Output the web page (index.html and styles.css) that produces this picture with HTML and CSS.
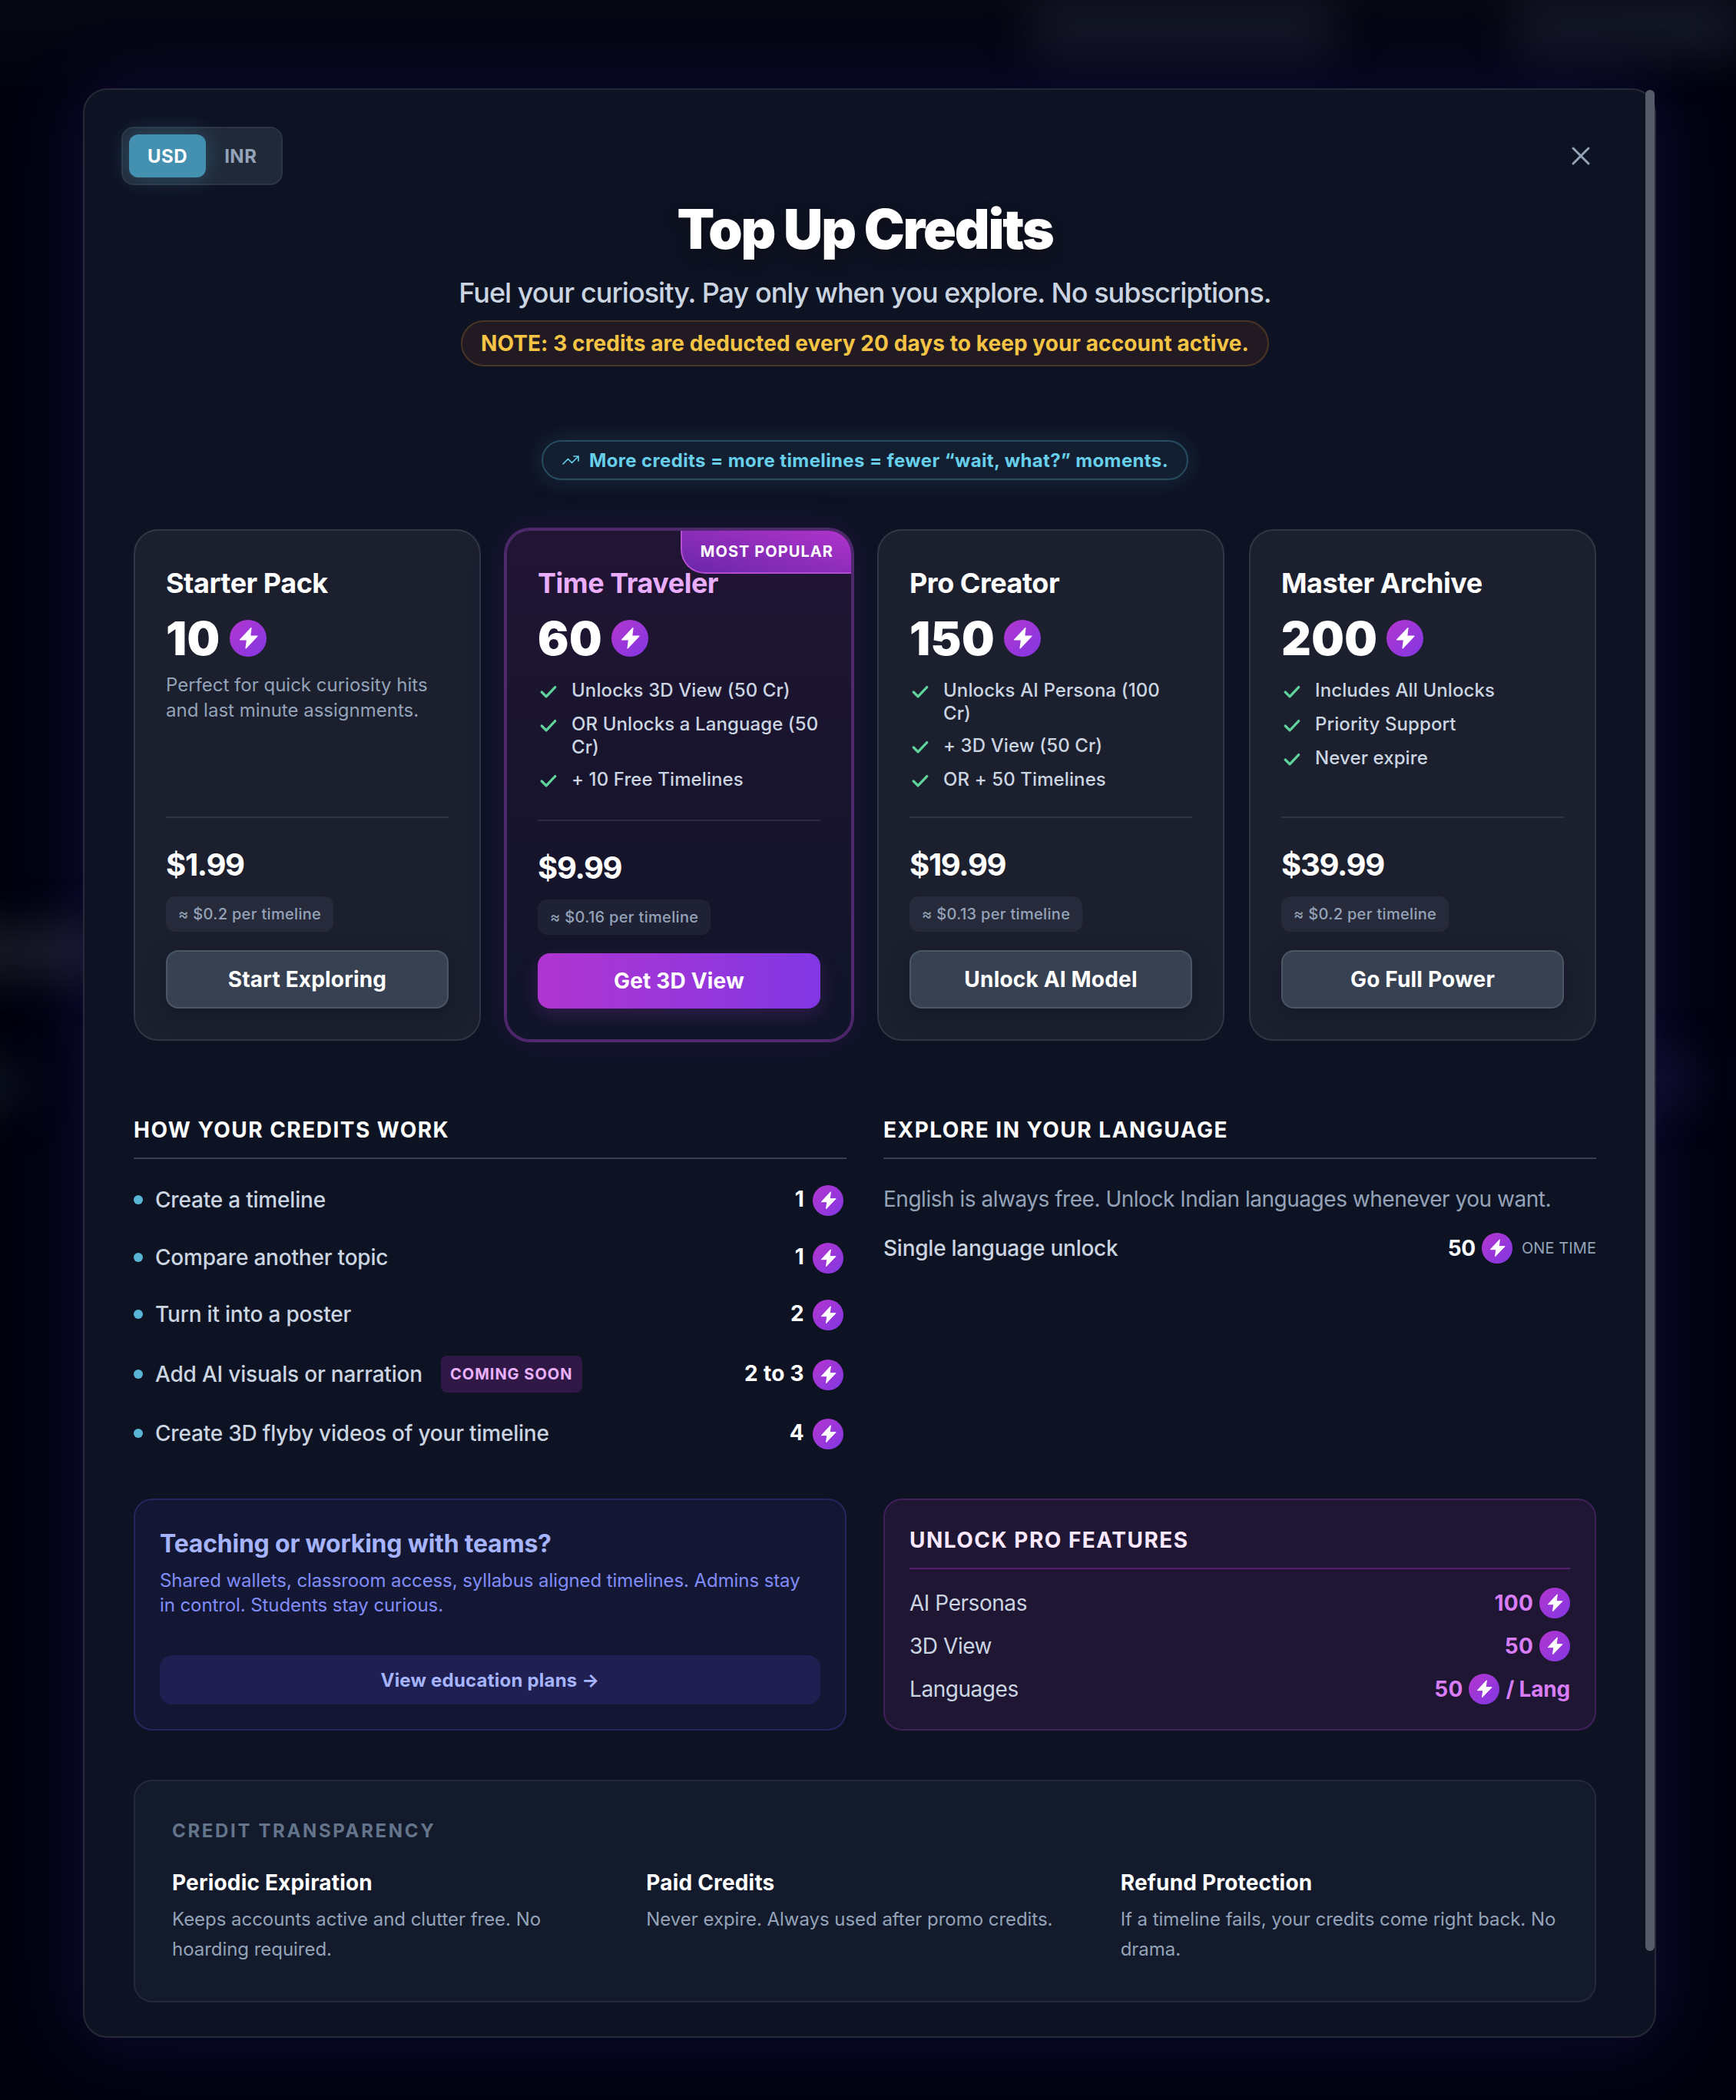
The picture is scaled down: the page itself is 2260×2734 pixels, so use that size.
FILE: index.html
```
<!DOCTYPE html>
<html lang="en">
<head>
    <meta charset="utf-8">
    <title>Top Up Credits</title>
    <link rel="stylesheet" href="styles.css">
</head>
<body>
    <svg class="sprite">
        <defs>
            <symbol id="bolt" viewBox="0 0 48 48">
                <path d="M28 10.5 L13.5 26 H22.5 L21 37 L36 21.2 H26.7 Z" fill="#fff" stroke="#fff" stroke-width="1.2" stroke-linejoin="round"/>
            </symbol>
            <symbol id="check" viewBox="0 0 24 24">
                <path d="M19.5 6.5 9.5 17l-5-5" fill="none" stroke="currentColor" stroke-width="2.8" stroke-linecap="round" stroke-linejoin="round"/>
            </symbol>
        </defs>
    </svg>

    <div class="overlay">
        <div class="blur blur_nav_a"></div>
        <div class="blur blur_nav_b"></div>
        <div class="blur blur_left_a"></div>
        <div class="blur blur_left_b"></div>
        <div class="blur blur_right"></div>

        <div class="modal">
            <div class="scrollbar"></div>

            <div class="modal_top">
                <div class="currency">
                    <div class="currency_item active">USD</div>
                    <div class="currency_item">INR</div>
                </div>
                <svg class="close" viewBox="0 0 24 24"><path d="M18 6 6 18M6 6l12 12"/></svg>
            </div>

            <div class="header">
                <h1>Top Up Credits</h1>
                <div class="subtitle">Fuel your curiosity. Pay only when you explore. No subscriptions.</div>
                <div class="note">NOTE: 3 credits are deducted every 20 days to keep your account active.</div>
                <div class="tagline">
                    <svg class="trend" viewBox="0 0 24 24"><path d="M22 7 13.5 15.5 8.5 10.5 2 17M16 7h6v6"/></svg>
                    <span>More credits = more timelines = fewer “wait, what?” moments.</span>
                </div>
            </div>

            <div class="plans">
                <div class="plan">
                    <div class="plan_name">Starter Pack</div>
                    <div class="plan_credits">10 <svg class="coin"><use href="#bolt"/></svg></div>
                    <div class="plan_desc">Perfect for quick curiosity hits and last minute assignments.</div>
                    <div class="plan_bottom">
                        <div class="price">$1.99</div>
                        <div class="rate">≈ $0.2 per timeline</div>
                        <div class="buy">Start Exploring</div>
                    </div>
                </div>

                <div class="plan popular">
                    <div class="badge">MOST POPULAR</div>
                    <div class="plan_name">Time Traveler</div>
                    <div class="plan_credits">60 <svg class="coin"><use href="#bolt"/></svg></div>
                    <div class="features">
                        <div class="feature"><svg class="check"><use href="#check"/></svg><span>Unlocks 3D View (50 Cr)</span></div>
                        <div class="feature"><svg class="check"><use href="#check"/></svg><span>OR Unlocks a Language (50<br>Cr)</span></div>
                        <div class="feature"><svg class="check"><use href="#check"/></svg><span>+ 10 Free Timelines</span></div>
                    </div>
                    <div class="plan_bottom">
                        <div class="price">$9.99</div>
                        <div class="rate">≈ $0.16 per timeline</div>
                        <div class="buy">Get 3D View</div>
                    </div>
                </div>

                <div class="plan">
                    <div class="plan_name">Pro Creator</div>
                    <div class="plan_credits">150 <svg class="coin"><use href="#bolt"/></svg></div>
                    <div class="features">
                        <div class="feature"><svg class="check"><use href="#check"/></svg><span>Unlocks AI Persona (100<br>Cr)</span></div>
                        <div class="feature"><svg class="check"><use href="#check"/></svg><span>+ 3D View (50 Cr)</span></div>
                        <div class="feature"><svg class="check"><use href="#check"/></svg><span>OR + 50 Timelines</span></div>
                    </div>
                    <div class="plan_bottom">
                        <div class="price">$19.99</div>
                        <div class="rate">≈ $0.13 per timeline</div>
                        <div class="buy">Unlock AI Model</div>
                    </div>
                </div>

                <div class="plan">
                    <div class="plan_name">Master Archive</div>
                    <div class="plan_credits">200 <svg class="coin"><use href="#bolt"/></svg></div>
                    <div class="features">
                        <div class="feature"><svg class="check"><use href="#check"/></svg><span>Includes All Unlocks</span></div>
                        <div class="feature"><svg class="check"><use href="#check"/></svg><span>Priority Support</span></div>
                        <div class="feature"><svg class="check"><use href="#check"/></svg><span>Never expire</span></div>
                    </div>
                    <div class="plan_bottom">
                        <div class="price">$39.99</div>
                        <div class="rate">≈ $0.2 per timeline</div>
                        <div class="buy">Go Full Power</div>
                    </div>
                </div>
            </div>

            <div class="info">
                <div class="section">
                    <h2>HOW YOUR CREDITS WORK</h2>
                    <div class="costs">
                        <div class="cost"><i class="dot"></i><span>Create a timeline</span><b>1</b><svg class="coin small"><use href="#bolt"/></svg></div>
                        <div class="cost"><i class="dot"></i><span>Compare another topic</span><b>1</b><svg class="coin small"><use href="#bolt"/></svg></div>
                        <div class="cost"><i class="dot"></i><span>Turn it into a poster</span><b>2</b><svg class="coin small"><use href="#bolt"/></svg></div>
                        <div class="cost tall"><i class="dot"></i><span>Add AI visuals or narration</span><em class="soon">COMING SOON</em><b>2 to 3</b><svg class="coin small"><use href="#bolt"/></svg></div>
                        <div class="cost"><i class="dot"></i><span>Create 3D flyby videos of your timeline</span><b>4</b><svg class="coin small"><use href="#bolt"/></svg></div>
                    </div>
                </div>

                <div class="section">
                    <h2>EXPLORE IN YOUR LANGUAGE</h2>
                    <div class="language_text">English is always free. Unlock Indian languages whenever you want.</div>
                    <div class="language">
                        <span>Single language unlock</span><b>50</b><svg class="coin small"><use href="#bolt"/></svg><small>ONE TIME</small>
                    </div>
                </div>

                <div class="box teams">
                    <h3>Teaching or working with teams?</h3>
                    <p>Shared wallets, classroom access, syllabus aligned timelines. Admins stay<br>in control. Students stay curious.</p>
                    <div class="teams_button">View education plans →</div>
                </div>

                <div class="box pro">
                    <h2>UNLOCK PRO FEATURES</h2>
                    <div class="pro_rows">
                        <div class="pro_row"><span>AI Personas</span><b>100</b><svg class="coin small"><use href="#bolt"/></svg></div>
                        <div class="pro_row"><span>3D View</span><b>50</b><svg class="coin small"><use href="#bolt"/></svg></div>
                        <div class="pro_row"><span>Languages</span><b>50</b><svg class="coin small"><use href="#bolt"/></svg><b class="per">/ Lang</b></div>
                    </div>
                </div>
            </div>

            <div class="transparency">
                <h4>CREDIT TRANSPARENCY</h4>
                <div class="policies">
                    <div>
                        <h5>Periodic Expiration</h5>
                        <p>Keeps accounts active and clutter free. No hoarding required.</p>
                    </div>
                    <div>
                        <h5>Paid Credits</h5>
                        <p>Never expire. Always used after promo credits.</p>
                    </div>
                    <div>
                        <h5>Refund Protection</h5>
                        <p>If a timeline fails, your credits come right back. No drama.</p>
                    </div>
                </div>
            </div>
        </div>
    </div>
</body>
</html>
```
FILE: styles.css
```
* {
    box-sizing: border-box;
}

body {
    margin: 0;
    font-family: Inter, "Noto Sans", sans-serif;
    background: #02020f;
    color: #fff;
}

h1, h2, h3, h4, h5, p {
    margin: 0;
}

.sprite {
    display: none;
}

.overlay {
    position: relative;
    height: 2734px;
    padding: 115px 104px 0 108px;
    overflow: hidden;
    background: linear-gradient(180deg, #070814, #02020f 120px);
}

/* page content showing through the backdrop */
.blur {
    position: absolute;
    filter: blur(28px);
}

.blur_nav_a {
    left: 1345px;
    top: 0;
    width: 390px;
    height: 68px;
    background: #151928;
}

.blur_nav_b {
    left: 1975px;
    top: 0;
    width: 285px;
    height: 68px;
    background: #151928;
}

.blur_left_a {
    left: -60px;
    top: 1208px;
    width: 190px;
    height: 60px;
    background: #1d1d2a;
}

.blur_left_b {
    left: -60px;
    top: 1385px;
    width: 90px;
    height: 56px;
    background: #0d1420;
}

.blur_right {
    left: 2130px;
    top: 1375px;
    width: 90px;
    height: 60px;
    background: #0a0a24;
}

.modal {
    position: relative;
    width: 2048px;
    height: 2538px;
    padding: 48px 76px 44px 64px;
    border: 2px solid #262938;
    border-radius: 32px;
    background: #0e1324;
    box-shadow: 0 0 100px rgba(79, 70, 229, 0.2);
}

.scrollbar {
    position: absolute;
    top: 0;
    right: 0;
    width: 12px;
    height: 2423px;
    border-radius: 6px;
    background: #575b69;
}

.modal_top {
    display: flex;
    justify-content: space-between;
    align-items: center;
    margin-left: -16px;
}

.currency {
    display: flex;
    padding: 8px;
    border: 2px solid #2c3545;
    border-radius: 16px;
    background: #202938;
}

.currency_item {
    height: 56px;
    padding: 0 24px;
    border-radius: 12px;
    font-size: 24px;
    line-height: 57px;
    font-weight: 700;
    letter-spacing: 0.5px;
    color: #94a3b8;
}

.currency_item.active {
    color: #fff;
    background: #4490b1;
    box-shadow: 0 0 30px rgba(68, 144, 177, 0.4);
}

.close {
    width: 40px;
    height: 40px;
    fill: none;
    stroke: #94a3b8;
    stroke-width: 1.8;
    stroke-linecap: round;
}

.header {
    display: flex;
    flex-direction: column;
    align-items: center;
    margin-top: 21px;
}

h1 {
    font-size: 71px;
    line-height: 72px;
    font-weight: 900;
    letter-spacing: -2.2px;
    text-shadow: 0 8px 16px rgba(12, 12, 20, 0.8);
}

.subtitle {
    margin-top: 19px;
    font-size: 36px;
    line-height: 56px;
    font-weight: 500;
    letter-spacing: -0.97px;
    color: #cbd5e1;
}

.note {
    height: 60px;
    margin-top: 8px;
    padding: 0 24px;
    border: 2px solid #4a3426;
    border-radius: 30px;
    background: #211a22;
    font-size: 28px;
    line-height: 56px;
    font-weight: 700;
    letter-spacing: 0.08px;
    color: #f5c445;
}

.tagline {
    display: flex;
    align-items: center;
    gap: 12px;
    height: 52px;
    margin-top: 96px;
    padding: 0 24px;
    border: 2px solid #264c60;
    border-radius: 26px;
    background: #131e31;
    box-shadow: 0 0 30px rgba(68, 144, 177, 0.2);
    font-size: 24px;
    font-weight: 700;
    letter-spacing: 0.37px;
    color: #67cfea;
}

.trend {
    width: 24px;
    height: 24px;
    fill: none;
    stroke: currentColor;
    stroke-width: 1.7;
    stroke-linecap: round;
    stroke-linejoin: round;
}

.coin {
    flex: none;
    width: 48px;
    height: 48px;
    border-radius: 50%;
    background: linear-gradient(135deg, #b436cf, #8137e3);
}

.coin.small {
    width: 40px;
    height: 40px;
}

/* plans */
.plans {
    display: grid;
    grid-template-columns: repeat(4, 1fr);
    gap: 32px;
    margin-top: 64px;
}

.plan {
    position: relative;
    display: flex;
    flex-direction: column;
    height: 666px;
    padding: 40px;
    border: 2px solid #323545;
    border-radius: 32px;
    background: #1b1f2e;
}

.plan.popular {
    border-color: #50286e;
    background: linear-gradient(180deg, #211534, #18142d 50%, #101529);
    box-shadow: 0 0 0 2px #50286e, 0 0 50px rgba(120, 50, 180, 0.15);
}

.badge {
    position: absolute;
    top: 0;
    right: 0;
    height: 56px;
    padding: 0 23px 0 24px;
    border-left: 2px solid #b34ed3;
    border-bottom: 2px solid #b34ed3;
    border-radius: 0 30px 0 32px;
    background: linear-gradient(15deg, #6a27a8, #b033cc);
    font-size: 20px;
    line-height: 54px;
    font-weight: 700;
    letter-spacing: 1.05px;
}

.plan_name {
    font-size: 36px;
    line-height: 56px;
    font-weight: 700;
    letter-spacing: -0.48px;
}

.popular .plan_name {
    color: #e9adfb;
}

.plan_credits {
    display: flex;
    align-items: center;
    gap: 12px;
    margin-top: 8px;
    font-size: 60px;
    line-height: 72px;
    font-weight: 900;
    letter-spacing: 0.4px;
}

.plan_desc {
    margin-top: 8px;
    font-size: 24px;
    line-height: 33px;
    color: #94a3b8;
}

.features {
    display: flex;
    flex-direction: column;
    gap: 12px;
    margin-top: 17px;
}

.feature {
    display: flex;
    align-items: flex-start;
    gap: 16px;
    min-height: 32px;
    font-size: 24px;
    line-height: 30px;
    font-weight: 500;
    letter-spacing: 0.1px;
    color: #cbd5e1;
}

.check {
    flex: none;
    width: 28px;
    height: 28px;
    margin-top: 3px;
    color: #5fd39a;
}

.plan_bottom {
    display: flex;
    flex-direction: column;
    align-items: flex-start;
    margin-top: auto;
    padding-top: 33px;
    border-top: 2px solid #323545;
}

.popular .plan_bottom {
    border-color: #2d2940;
}

.price {
    font-size: 40px;
    line-height: 56px;
    font-weight: 700;
    letter-spacing: -1.3px;
}

.rate {
    height: 46px;
    margin-top: 13px;
    padding: 0 16px;
    border-radius: 12px;
    background: #272a3a;
    font-size: 20px;
    line-height: 46px;
    font-weight: 500;
    letter-spacing: 0.32px;
    color: #94a3b8;
}

.popular .rate {
    background: #1f2134;
}

.buy {
    align-self: stretch;
    height: 76px;
    margin-top: 24px;
    border: 2px solid #4b5667;
    border-radius: 16px;
    background: #374152;
    box-shadow: 0 8px 24px rgba(20, 20, 32, 0.5);
    font-size: 28px;
    line-height: 72px;
    font-weight: 700;
    letter-spacing: 0.18px;
    text-align: center;
}

.popular .buy {
    height: 72px;
    border: none;
    background: linear-gradient(90deg, #b035d0, #8237e4);
    box-shadow: 0 8px 24px rgba(176, 53, 208, 0.2);
}

/* info grid */
.info {
    display: grid;
    grid-template-columns: 1fr 1fr;
    gap: 64px 48px;
    margin-top: 96px;
}

h2 {
    height: 58px;
    border-bottom: 2px solid #374151;
    font-size: 28px;
    line-height: 40px;
    font-weight: 700;
    letter-spacing: 1.48px;
}

.costs {
    display: flex;
    flex-direction: column;
    gap: 32px;
    padding-top: 32px;
}

.cost {
    display: flex;
    align-items: center;
    height: 42.5px;
    padding-right: 4px;
    font-size: 28px;
    font-weight: 500;
    color: #cbd5e1;
    letter-spacing: -0.2px;
}

.cost.tall {
    height: 48px;
}

.cost .coin {
    margin-top: 2px;
}

.dot {
    width: 12px;
    height: 12px;
    margin-right: 16px;
    border-radius: 50%;
    background: #58b5d6;
}

.cost b {
    margin-left: auto;
    margin-right: 11px;
    padding-bottom: 2px;
    font-weight: 700;
    letter-spacing: 0.3px;
    color: #fff;
}

.soon {
    height: 48px;
    margin-left: 24px;
    padding: 0 12px;
    border-radius: 8px;
    background: #301846;
    font-size: 20px;
    line-height: 48px;
    font-style: normal;
    font-weight: 700;
    letter-spacing: 1px;
    color: #eab0fc;
}

.language_text {
    padding-top: 32px;
    font-size: 28px;
    line-height: 40px;
    letter-spacing: -0.48px;
    color: #94a3b8;
}

.language {
    display: flex;
    align-items: center;
    height: 40px;
    margin-top: 24px;
    font-size: 28px;
    font-weight: 500;
    letter-spacing: -0.25px;
    color: #cbd5e1;
}

.language b,
.pro_row span + b {
    margin-left: auto;
    margin-right: 8px;
}

.language b {
    font-weight: 700;
    color: #fff;
}

.language small {
    margin-left: 12px;
    font-size: 20px;
    font-weight: 400;
    letter-spacing: 0.08px;
    color: #94a3b8;
}

.box {
    display: flex;
    flex-direction: column;
    height: 302px;
    padding: 32px;
    border: 2px solid #25265e;
    border-radius: 24px;
    background: #131734;
}

h3 {
    font-size: 32px;
    line-height: 49px;
    font-weight: 700;
    letter-spacing: -0.22px;
    color: #a5b4fc;
}

.teams p {
    margin-top: 8px;
    font-size: 24px;
    line-height: 32px;
    letter-spacing: -0.09px;
    color: #818cf8;
}

.teams_button {
    height: 64px;
    margin-top: auto;
    border-radius: 16px;
    background: #1f1f51;
    font-size: 24px;
    line-height: 65px;
    font-weight: 700;
    letter-spacing: 0.21px;
    text-align: center;
    color: #a5b4fc;
}

.box.pro {
    border-color: #40205a;
    background: #1e1633;
}

.pro h2 {
    border-color: #581c70;
    color: #fae8ff;
}

.pro_rows {
    display: flex;
    flex-direction: column;
    gap: 16px;
    padding-top: 24px;
}

.pro_row {
    display: flex;
    align-items: center;
    height: 40px;
    font-size: 28px;
    letter-spacing: -0.45px;
    color: #cbd5e1;
}

.pro_row b {
    font-weight: 700;
    letter-spacing: 0.2px;
    color: #d87cf8;
}

.pro_row .per {
    margin-left: 8px;
    letter-spacing: -0.2px;
}

.transparency {
    height: 290px;
    margin-top: 64px;
    padding: 48px;
    border: 2px solid #242a3b;
    border-radius: 24px;
    background: #131a2b;
}

h4 {
    font-size: 24px;
    line-height: 33px;
    font-weight: 700;
    letter-spacing: 2.65px;
    color: #64748b;
}

.policies {
    display: grid;
    grid-template-columns: repeat(3, 1fr);
    gap: 48px;
    margin-top: 31px;
}

h5 {
    font-size: 28px;
    line-height: 40px;
    font-weight: 700;
    letter-spacing: 0.18px;
}

.policies p {
    margin-top: 8px;
    font-size: 24px;
    line-height: 39px;
    letter-spacing: -0.04px;
    color: #94a3b8;
}
```
